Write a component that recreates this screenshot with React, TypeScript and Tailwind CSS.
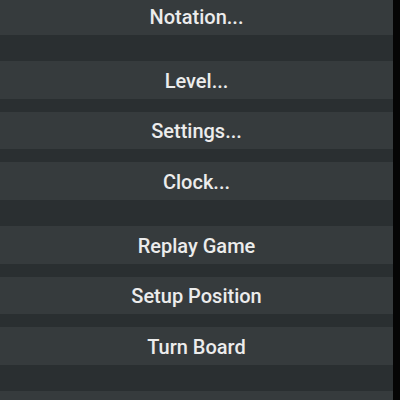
const groups: string[][] = [
  ["Notation..."],
  ["Level...", "Settings...", "Clock..."],
  ["Replay Game", "Setup Position", "Turn Board"],
  [""],
];

function MenuButton({ label }: { label: string }) {
  return (
    <div className="flex h-[37.5px] shrink-0 items-center justify-center bg-[#363b3d] pt-[2px] text-[20px] font-medium text-[#ececec]">
      {label}
    </div>
  );
}

export default function App() {
  return (
    <div className="flex h-[400px] w-[400px] overflow-hidden bg-[#050505] font-['Roboto',sans-serif]">
      <div className="mt-[-3px] flex h-[404px] w-[393px] flex-col gap-[26.5px] bg-[#2a2f31]">
        {groups.map((items, gi) => (
          <div key={gi} className="flex flex-col gap-[13px]">
            {items.map((label, i) => (
              <MenuButton key={i} label={label} />
            ))}
          </div>
        ))}
      </div>
    </div>
  );
}
